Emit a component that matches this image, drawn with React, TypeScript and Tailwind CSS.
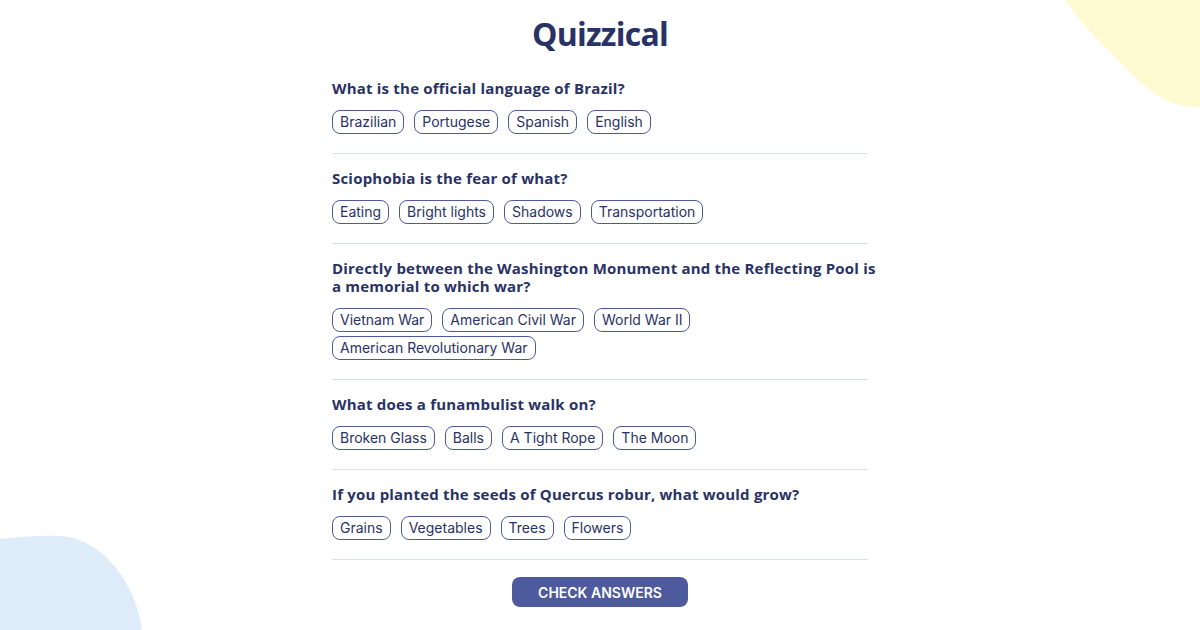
import React from "react";

type Q = { q: string; answers: string[] };

const questions: Q[] = [
  { q: "What is the official language of Brazil?", answers: ["Brazilian", "Portugese", "Spanish", "English"] },
  { q: "Sciophobia is the fear of what?", answers: ["Eating", "Bright lights", "Shadows", "Transportation"] },
  {
    q: "Directly between the Washington Monument and the Reflecting Pool is a memorial to which war?",
    answers: ["Vietnam War", "American Civil War", "World War II", "American Revolutionary War"],
  },
  { q: "What does a funambulist walk on?", answers: ["Broken Glass", "Balls", "A Tight Rope", "The Moon"] },
  {
    q: "If you planted the seeds of Quercus robur, what would grow?",
    answers: ["Grains", "Vegetables", "Trees", "Flowers"],
  },
];

export default function App() {
  return (
    <div className="relative w-[1200px] h-[630px] overflow-hidden bg-white">
      <svg className="absolute left-0 top-0" width="1200" height="630" viewBox="0 0 1200 630">
        <path d="M1065 0 C1085 30 1118 60 1140 82 C1162 102 1180 107 1200 107 L1200 0 Z" fill="#FFFAD1" />
        <path d="M0 539 C20 537 40 535 60 536 C100 538 135 580 142 630 L0 630 Z" fill="#DEEBF8" />
      </svg>
      <div className="relative mx-auto w-[536px] pt-[14px]">
        <h1
          className="text-center text-[32px] leading-[40px] font-bold tracking-[-0.75px] text-[#293264] mb-[10px]"
          style={{ fontFamily: '"Open Sans", sans-serif' }}
        >
          Quizzical
        </h1>
        {questions.map((item, i) => (
          <div key={i} className="border-b border-[#DBDEF0] pt-[15px] pb-[19px] last:pb-[20px]">
            <h2
              className="w-[546px] text-[15px] leading-[18px] font-bold tracking-[0.2px] text-[#293264]"
              style={{ fontFamily: '"Open Sans", sans-serif' }}
            >
              {item.q}
            </h2>
            <div className="mt-[13px] flex flex-wrap gap-x-[10px] gap-y-[4px]">
              {item.answers.map((a) => (
                <button
                  key={a}
                  className="h-[24px] px-[7px] rounded-lg border border-[#4D5B9E] text-[14px] leading-[22px] text-[#293264] bg-transparent"
                  style={{ fontFamily: "Inter, sans-serif" }}
                >
                  {a}
                </button>
              ))}
            </div>
          </div>
        ))}
        <div className="flex justify-center mt-[17px]">
          <button
            className="w-[176px] h-[30px] rounded-lg bg-[#4D5B9E] text-white text-[14px] font-semibold"
            style={{ fontFamily: "Inter, sans-serif" }}
          >
            CHECK ANSWERS
          </button>
        </div>
      </div>
    </div>
  );
}
